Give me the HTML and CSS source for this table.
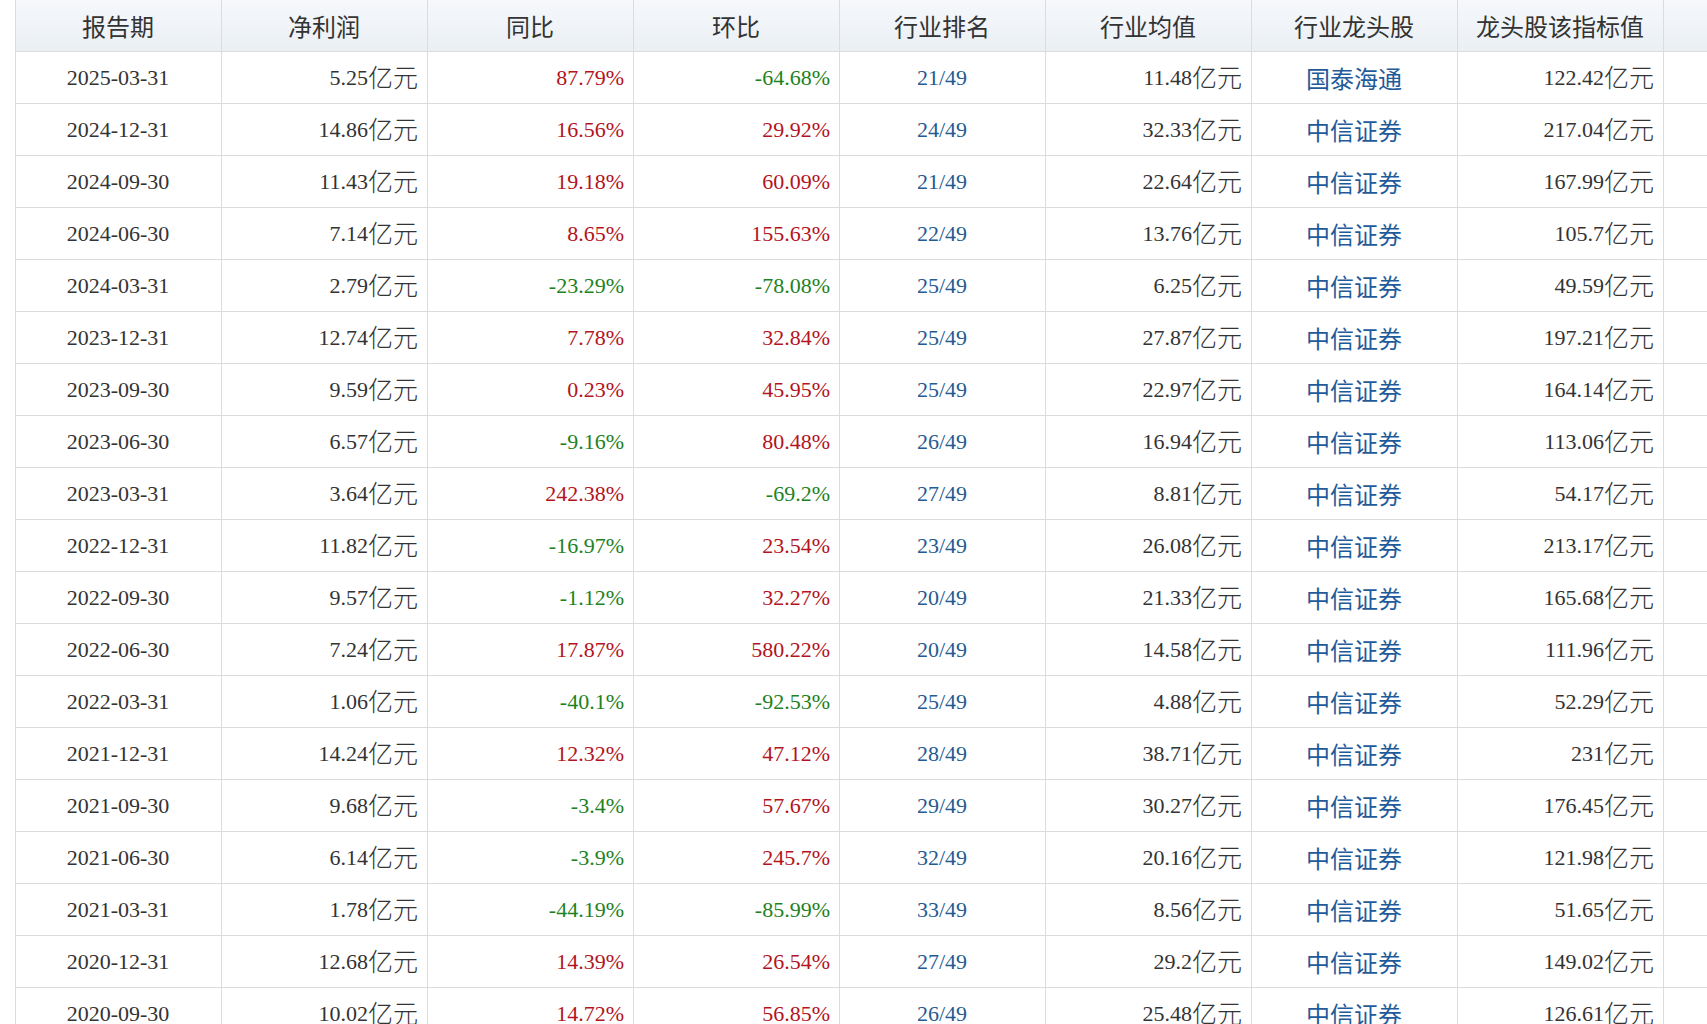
FILE: index.html
```html
<!DOCTYPE html>
<html lang="zh-CN">
<head>
<meta charset="utf-8">
<title>净利润</title>
<link rel="stylesheet" href="styles.css">
</head>
<body>
<div class="wrap">
<table class="data">
<colgroup>
<col class="c"><col class="c"><col class="c"><col class="c"><col class="c"><col class="c"><col class="c"><col class="c"><col class="c">
</colgroup>
<thead>
<tr><th>报告期</th><th>净利润</th><th>同比</th><th>环比</th><th>行业排名</th><th>行业均值</th><th>行业龙头股</th><th>龙头股该指标值</th><th></th></tr>
</thead>
<tbody>
<tr><td class="ctr">2025-03-31</td><td class="r">5.25<span class="u">亿元</span></td><td class="r up">87.79%</td><td class="r dn">-64.68%</td><td class="ctr rk">21/49</td><td class="r">11.48<span class="u">亿元</span></td><td class="ctr"><a href="#">国泰海通</a></td><td class="r">122.42<span class="u">亿元</span></td><td></td></tr>
<tr><td class="ctr">2024-12-31</td><td class="r">14.86<span class="u">亿元</span></td><td class="r up">16.56%</td><td class="r up">29.92%</td><td class="ctr rk">24/49</td><td class="r">32.33<span class="u">亿元</span></td><td class="ctr"><a href="#">中信证券</a></td><td class="r">217.04<span class="u">亿元</span></td><td></td></tr>
<tr><td class="ctr">2024-09-30</td><td class="r">11.43<span class="u">亿元</span></td><td class="r up">19.18%</td><td class="r up">60.09%</td><td class="ctr rk">21/49</td><td class="r">22.64<span class="u">亿元</span></td><td class="ctr"><a href="#">中信证券</a></td><td class="r">167.99<span class="u">亿元</span></td><td></td></tr>
<tr><td class="ctr">2024-06-30</td><td class="r">7.14<span class="u">亿元</span></td><td class="r up">8.65%</td><td class="r up">155.63%</td><td class="ctr rk">22/49</td><td class="r">13.76<span class="u">亿元</span></td><td class="ctr"><a href="#">中信证券</a></td><td class="r">105.7<span class="u">亿元</span></td><td></td></tr>
<tr><td class="ctr">2024-03-31</td><td class="r">2.79<span class="u">亿元</span></td><td class="r dn">-23.29%</td><td class="r dn">-78.08%</td><td class="ctr rk">25/49</td><td class="r">6.25<span class="u">亿元</span></td><td class="ctr"><a href="#">中信证券</a></td><td class="r">49.59<span class="u">亿元</span></td><td></td></tr>
<tr><td class="ctr">2023-12-31</td><td class="r">12.74<span class="u">亿元</span></td><td class="r up">7.78%</td><td class="r up">32.84%</td><td class="ctr rk">25/49</td><td class="r">27.87<span class="u">亿元</span></td><td class="ctr"><a href="#">中信证券</a></td><td class="r">197.21<span class="u">亿元</span></td><td></td></tr>
<tr><td class="ctr">2023-09-30</td><td class="r">9.59<span class="u">亿元</span></td><td class="r up">0.23%</td><td class="r up">45.95%</td><td class="ctr rk">25/49</td><td class="r">22.97<span class="u">亿元</span></td><td class="ctr"><a href="#">中信证券</a></td><td class="r">164.14<span class="u">亿元</span></td><td></td></tr>
<tr><td class="ctr">2023-06-30</td><td class="r">6.57<span class="u">亿元</span></td><td class="r dn">-9.16%</td><td class="r up">80.48%</td><td class="ctr rk">26/49</td><td class="r">16.94<span class="u">亿元</span></td><td class="ctr"><a href="#">中信证券</a></td><td class="r">113.06<span class="u">亿元</span></td><td></td></tr>
<tr><td class="ctr">2023-03-31</td><td class="r">3.64<span class="u">亿元</span></td><td class="r up">242.38%</td><td class="r dn">-69.2%</td><td class="ctr rk">27/49</td><td class="r">8.81<span class="u">亿元</span></td><td class="ctr"><a href="#">中信证券</a></td><td class="r">54.17<span class="u">亿元</span></td><td></td></tr>
<tr><td class="ctr">2022-12-31</td><td class="r">11.82<span class="u">亿元</span></td><td class="r dn">-16.97%</td><td class="r up">23.54%</td><td class="ctr rk">23/49</td><td class="r">26.08<span class="u">亿元</span></td><td class="ctr"><a href="#">中信证券</a></td><td class="r">213.17<span class="u">亿元</span></td><td></td></tr>
<tr><td class="ctr">2022-09-30</td><td class="r">9.57<span class="u">亿元</span></td><td class="r dn">-1.12%</td><td class="r up">32.27%</td><td class="ctr rk">20/49</td><td class="r">21.33<span class="u">亿元</span></td><td class="ctr"><a href="#">中信证券</a></td><td class="r">165.68<span class="u">亿元</span></td><td></td></tr>
<tr><td class="ctr">2022-06-30</td><td class="r">7.24<span class="u">亿元</span></td><td class="r up">17.87%</td><td class="r up">580.22%</td><td class="ctr rk">20/49</td><td class="r">14.58<span class="u">亿元</span></td><td class="ctr"><a href="#">中信证券</a></td><td class="r">111.96<span class="u">亿元</span></td><td></td></tr>
<tr><td class="ctr">2022-03-31</td><td class="r">1.06<span class="u">亿元</span></td><td class="r dn">-40.1%</td><td class="r dn">-92.53%</td><td class="ctr rk">25/49</td><td class="r">4.88<span class="u">亿元</span></td><td class="ctr"><a href="#">中信证券</a></td><td class="r">52.29<span class="u">亿元</span></td><td></td></tr>
<tr><td class="ctr">2021-12-31</td><td class="r">14.24<span class="u">亿元</span></td><td class="r up">12.32%</td><td class="r up">47.12%</td><td class="ctr rk">28/49</td><td class="r">38.71<span class="u">亿元</span></td><td class="ctr"><a href="#">中信证券</a></td><td class="r">231<span class="u">亿元</span></td><td></td></tr>
<tr><td class="ctr">2021-09-30</td><td class="r">9.68<span class="u">亿元</span></td><td class="r dn">-3.4%</td><td class="r up">57.67%</td><td class="ctr rk">29/49</td><td class="r">30.27<span class="u">亿元</span></td><td class="ctr"><a href="#">中信证券</a></td><td class="r">176.45<span class="u">亿元</span></td><td></td></tr>
<tr><td class="ctr">2021-06-30</td><td class="r">6.14<span class="u">亿元</span></td><td class="r dn">-3.9%</td><td class="r up">245.7%</td><td class="ctr rk">32/49</td><td class="r">20.16<span class="u">亿元</span></td><td class="ctr"><a href="#">中信证券</a></td><td class="r">121.98<span class="u">亿元</span></td><td></td></tr>
<tr><td class="ctr">2021-03-31</td><td class="r">1.78<span class="u">亿元</span></td><td class="r dn">-44.19%</td><td class="r dn">-85.99%</td><td class="ctr rk">33/49</td><td class="r">8.56<span class="u">亿元</span></td><td class="ctr"><a href="#">中信证券</a></td><td class="r">51.65<span class="u">亿元</span></td><td></td></tr>
<tr><td class="ctr">2020-12-31</td><td class="r">12.68<span class="u">亿元</span></td><td class="r up">14.39%</td><td class="r up">26.54%</td><td class="ctr rk">27/49</td><td class="r">29.2<span class="u">亿元</span></td><td class="ctr"><a href="#">中信证券</a></td><td class="r">149.02<span class="u">亿元</span></td><td></td></tr>
<tr><td class="ctr">2020-09-30</td><td class="r">10.02<span class="u">亿元</span></td><td class="r up">14.72%</td><td class="r up">56.85%</td><td class="ctr rk">26/49</td><td class="r">25.48<span class="u">亿元</span></td><td class="ctr"><a href="#">中信证券</a></td><td class="r">126.61<span class="u">亿元</span></td><td></td></tr>
</tbody>
</table>
</div>
</body>
</html>
```
FILE: styles.css
```css
html, body {
  margin: 0;
  padding: 0;
  background: #ffffff;
}
.wrap {
  width: 100vw;
  height: 100vh;
  overflow: hidden;
  padding-left: 15px;
  box-sizing: border-box;
}
.data {
  border-collapse: collapse;
  table-layout: fixed;
  width: 1855px;
  font-family: "Liberation Serif", "Noto Sans CJK SC", serif;
  font-size: 22px;
  color: #333333;
}
.data col.c {
  width: 206px;
}
.data th,
.data td {
  border: 1px solid #dcdcdc;
  padding: 0 9px 0 8px;
  white-space: nowrap;
  overflow: hidden;
}
.data th {
  border-top: none;
  height: 51px;
  font-size: 24px;
  font-weight: normal;
  text-align: center;
  color: #333333;
  background: linear-gradient(#f6f8fb, #eaeff4);
}
.data td {
  height: 51px;
  background: #ffffff;
}
.data td.ctr {
  text-align: center;
}
.data td.r {
  text-align: right;
}
.data td.up {
  color: #b3141d;
}
.data td.dn {
  color: #1e821e;
}
.data td.rk {
  color: #255b91;
}
.data .u {
  font-size: 25px;
  font-weight: 300;
  line-height: 1;
  vertical-align: -2px;
}
.data a {
  font-size: 24px;
  color: #1f5b9b;
  text-decoration: none;
}
```
